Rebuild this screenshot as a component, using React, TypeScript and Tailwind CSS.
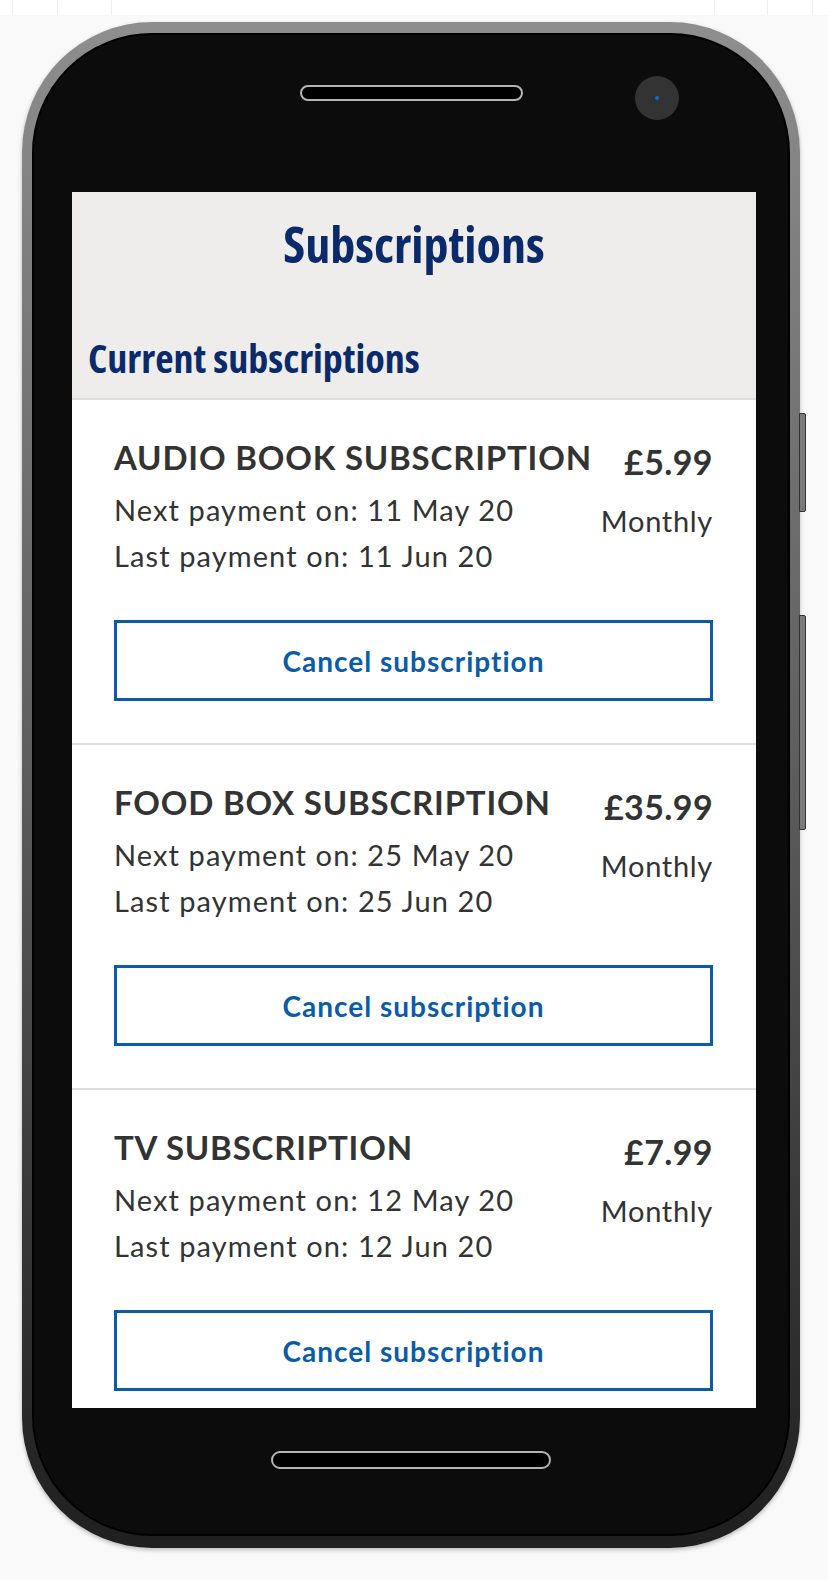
import React from "react";

const subs = [
  { name: "AUDIO BOOK SUBSCRIPTION", price: "£5.99", next: "11 May 20", last: "11 Jun 20" },
  { name: "FOOD BOX SUBSCRIPTION", price: "£35.99", next: "25 May 20", last: "25 Jun 20" },
  { name: "TV SUBSCRIPTION", price: "£7.99", next: "12 May 20", last: "12 Jun 20" },
];

const headFont = {
  fontFamily: '"Liberation Sans Narrow", "Open Sans", sans-serif',
};

const SubCard = ({ name, price, next, last }: (typeof subs)[number]) => {
  return (
    <div className="border-b-2 border-[#dddddd] px-[42px] pb-[42px] pt-[37px] pr-[43px] text-[#333333]">
      <div className="flex justify-between">
        <div>
          <p className="text-[33px] font-bold leading-[40px] tracking-[0.8px]">{name}</p>
          <p className="mt-[10px] text-[29px] leading-[46px] tracking-[1.1px]">Next payment on: {next}</p>
          <p className="text-[29px] leading-[46px] tracking-[1.1px]">Last payment on: {last}</p>
        </div>
        <div className="flex flex-col items-end">
          <p className="mt-[5px] text-[34px] font-bold leading-[40px] tracking-[0.4px]">{price}</p>
          <p className="mt-[16px] text-[29px] leading-[46px] tracking-[0.7px]">Monthly</p>
        </div>
      </div>
      <button className="mt-[41px] flex h-[81px] w-full items-center justify-center border-[3px] border-[#0a5ca9] text-[28px] font-bold tracking-[1px] text-[#0a5ca9]">
        Cancel subscription
      </button>
    </div>
  );
};

const App = () => {
  return (
    <div
      className="h-[1580px] w-[828px] overflow-hidden bg-[#f9f9f9]"
      style={{ fontFamily: 'Lato, "Open Sans", sans-serif' }}
    >
      {/* strip of the capture tool at the very top */}
      <div className="flex h-[15px] bg-white">
        <div className="w-[13px] border-r border-[#eeeeee]" />
        <div className="w-[45px] border-r border-[#eeeeee]" />
        <div className="w-[54px] border-r border-[#eeeeee]" />
        <div className="w-[603px] border-r border-[#eeeeee]" />
        <div className="w-[53px] border-r border-[#eeeeee]" />
        <div className="w-[45px] border-r border-[#eeeeee]" />
      </div>

      {/* phone */}
      <div className="relative ml-[22px] mt-[7px] h-[1526px] w-[778px] rounded-[130px] bg-linear-to-b from-[#8e8e8e] via-[#5c5c5c] to-[#1f1f1f] px-[10px] pb-[12px] pt-[11px] shadow-[0_2px_4px_rgba(0,0,0,0.25)]">
        <div className="absolute -right-[6px] top-[391px] h-[99px] w-[7px] rounded-r-[2px] border border-[#333333] bg-[#7a7a7a]" />
        <div className="absolute -right-[6px] top-[593px] h-[215px] w-[7px] rounded-r-[2px] border border-[#333333] bg-[#7a7a7a]" />

        <div className="flex h-full flex-col rounded-[120px] border-2 border-black bg-[#0c0c0c]">
          {/* top bezel */}
          <div className="relative h-[157px]">
            <div className="mx-auto mt-[50px] h-[16px] w-[223px] rounded-full border-2 border-[#b4b4b4] bg-black" />
            <div className="absolute left-[601px] top-[41px] flex h-[44px] w-[44px] items-center justify-center rounded-full bg-[#333333]">
              <div className="h-[4px] w-[4px] rounded-full bg-[#1b6fc2]" />
            </div>
          </div>

          {/* screen */}
          <div className="ml-[38px] h-[1216px] w-[684px] overflow-hidden bg-white">
            <div className="border-b-2 border-[#dddddd] bg-[#eeedeb] px-[16px] pb-[16px] pt-[22px] text-[#0a2a6a]" style={headFont}>
              <h1 className="text-center text-[50px] font-bold leading-[60px] font-stretch-condensed">Subscriptions</h1>
              <h2 className="mt-[60px] text-[40px] font-bold leading-[48px] font-stretch-condensed">Current subscriptions</h2>
            </div>
            {subs.map((s) => (
              <SubCard key={s.name} {...s} />
            ))}
          </div>

          {/* bottom bezel */}
          <div className="flex-1">
            <div className="mx-auto mt-[43px] h-[18px] w-[280px] rounded-full border-2 border-[#b4b4b4] bg-black" />
          </div>
        </div>
      </div>
    </div>
  );
};

export default App;
